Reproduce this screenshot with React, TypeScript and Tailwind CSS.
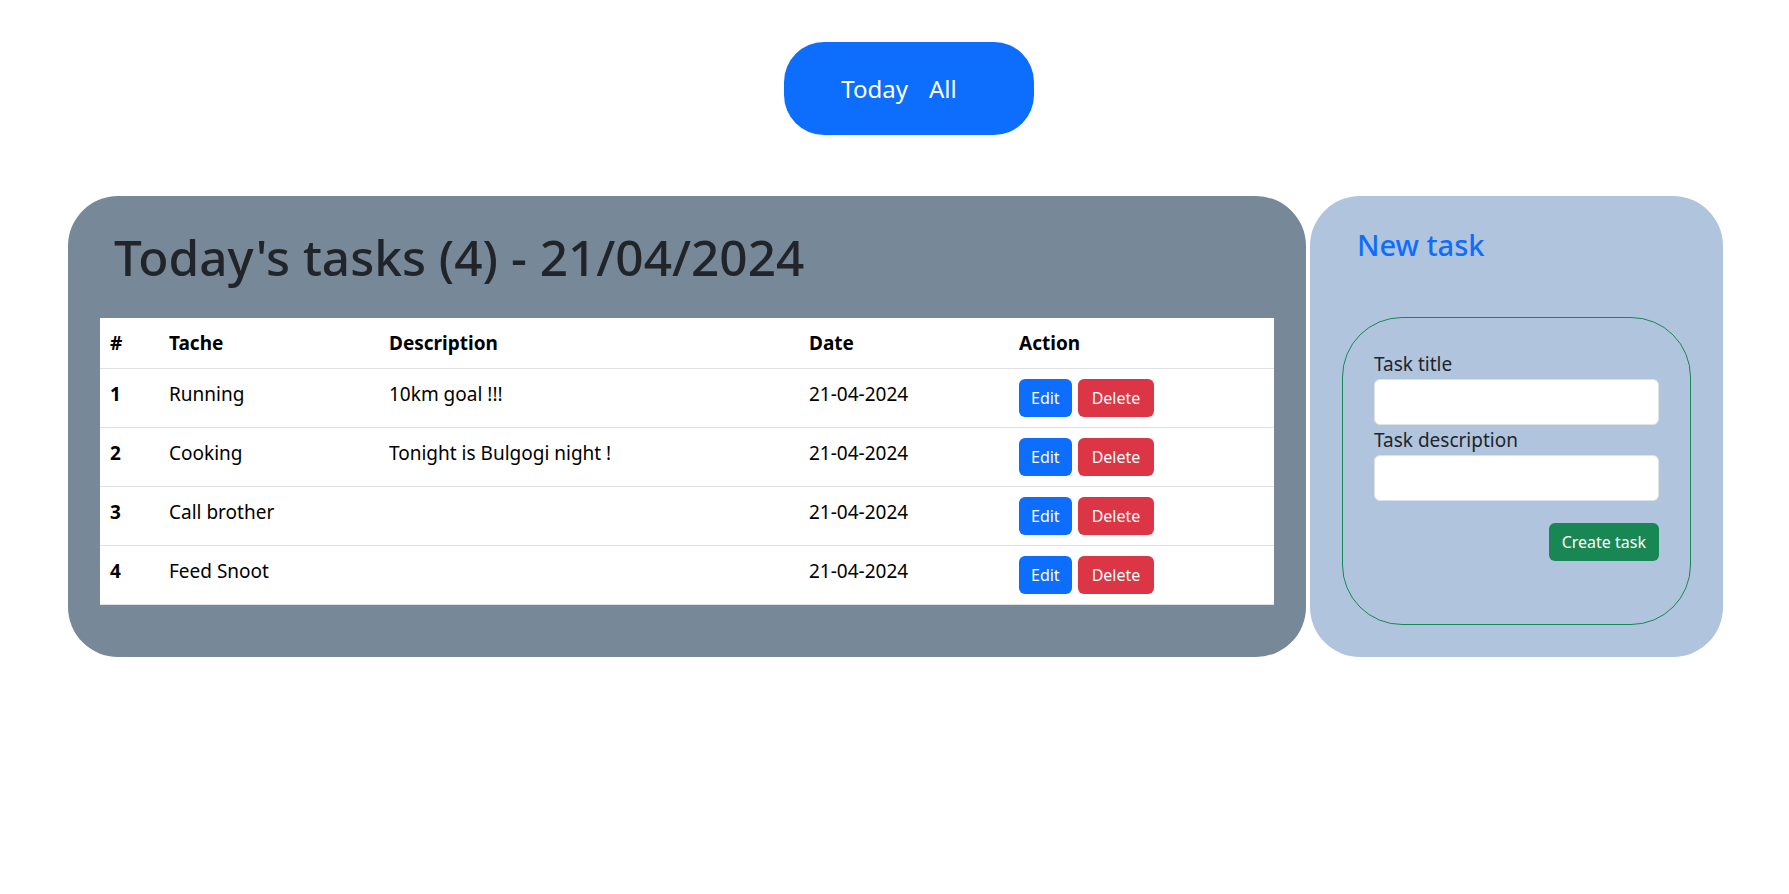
import React from "react";

const tasks = [
  { id: 1, title: "Running", desc: "10km goal !!!", date: "21-04-2024" },
  { id: 2, title: "Cooking", desc: "Tonight is Bulgogi night !", date: "21-04-2024" },
  { id: 3, title: "Call brother", desc: "", date: "21-04-2024" },
  { id: 4, title: "Feed Snoot", desc: "", date: "21-04-2024" },
];

export default function App() {
  return (
    <div
      className="min-h-screen bg-white text-[#212529]"
      style={{ fontFamily: '"Noto Sans", "Open Sans", sans-serif' }}
    >
      <div className="flex justify-center pt-[42px]">
        <div className="ml-[29px] flex h-[93px] items-center gap-[21px] rounded-[40px] bg-[#0d6efd] pl-[57px] pr-[77px] text-[24px] leading-[36px] text-white">
          <span>Today</span>
          <span>All</span>
        </div>
      </div>

      <div className="mt-[61px] flex gap-[4px] pl-[68px] pr-[66px]">
        <div className="flex-1 rounded-[50px] bg-[#778899] px-[32px] pb-[51px] pt-[30px]">
          <h1 className="pl-[14px] text-[49.5px] font-medium leading-[62px] text-[#212529]">
            Today's tasks (4) - 21/04/2024
          </h1>
          <table className="mt-[30px] w-full table-fixed border-collapse bg-white text-[19px] leading-[30px] text-black">
            <colgroup>
              <col className="w-[59px]" />
              <col className="w-[220px]" />
              <col className="w-[420px]" />
              <col className="w-[210px]" />
              <col />
            </colgroup>
            <thead>
              <tr className="border-b border-[#dee2e6]">
                <th className="px-[10px] py-[10px] text-left font-bold">#</th>
                <th className="px-[10px] py-[10px] text-left font-bold">Tache</th>
                <th className="px-[10px] py-[10px] text-left font-bold">Description</th>
                <th className="px-[10px] py-[10px] text-left font-bold">Date</th>
                <th className="px-[10px] py-[10px] text-left font-bold">Action</th>
              </tr>
            </thead>
            <tbody>
              {tasks.map((t) => (
                <tr key={t.id} className="border-b border-[#dee2e6]">
                  <td className="px-[10px] py-[10px] align-top font-bold">{t.id}</td>
                  <td className="px-[10px] py-[10px] align-top">{t.title}</td>
                  <td className="px-[10px] py-[10px] align-top">{t.desc}</td>
                  <td className="px-[10px] py-[10px] align-top">{t.date}</td>
                  <td className="px-[10px] py-[10px] align-top">
                    <div className="flex gap-[6px]">
                      <button className="h-[38px] rounded-[6px] bg-[#0d6efd] px-[12px] text-[16px] leading-[24px] text-white">
                        Edit
                      </button>
                      <button className="h-[38px] rounded-[6px] bg-[#dc3545] px-[14px] text-[16px] leading-[24px] text-white">
                        Delete
                      </button>
                    </div>
                  </td>
                </tr>
              ))}
            </tbody>
          </table>
        </div>

        <div className="w-[413px] rounded-[50px] bg-[#b0c4de] px-[32px] pb-[32px] pt-[32px]">
          <h3 className="pl-[15px] text-[29px] font-medium leading-[34px] text-[#0d6efd]">
            New task
          </h3>
          <div className="mt-[55px] rounded-[60px] border border-[#198754] px-[31px] pb-[63px] pt-[31px]">
            <label className="block text-[19px] leading-[30px] text-[#212529]">Task title</label>
            <input
              type="text"
              className="block h-[46px] w-full rounded-[6px] border border-[#dee2e6] bg-white px-3 outline-none"
            />
            <label className="block text-[19px] leading-[30px] text-[#212529]">Task description</label>
            <input
              type="text"
              className="block h-[46px] w-full rounded-[6px] border border-[#dee2e6] bg-white px-3 outline-none"
            />
            <div className="mt-[22px] flex justify-end">
              <button className="h-[38px] rounded-[6px] bg-[#198754] px-[13px] text-[16px] leading-[24px] text-white">
                Create task
              </button>
            </div>
          </div>
        </div>
      </div>
    </div>
  );
}
